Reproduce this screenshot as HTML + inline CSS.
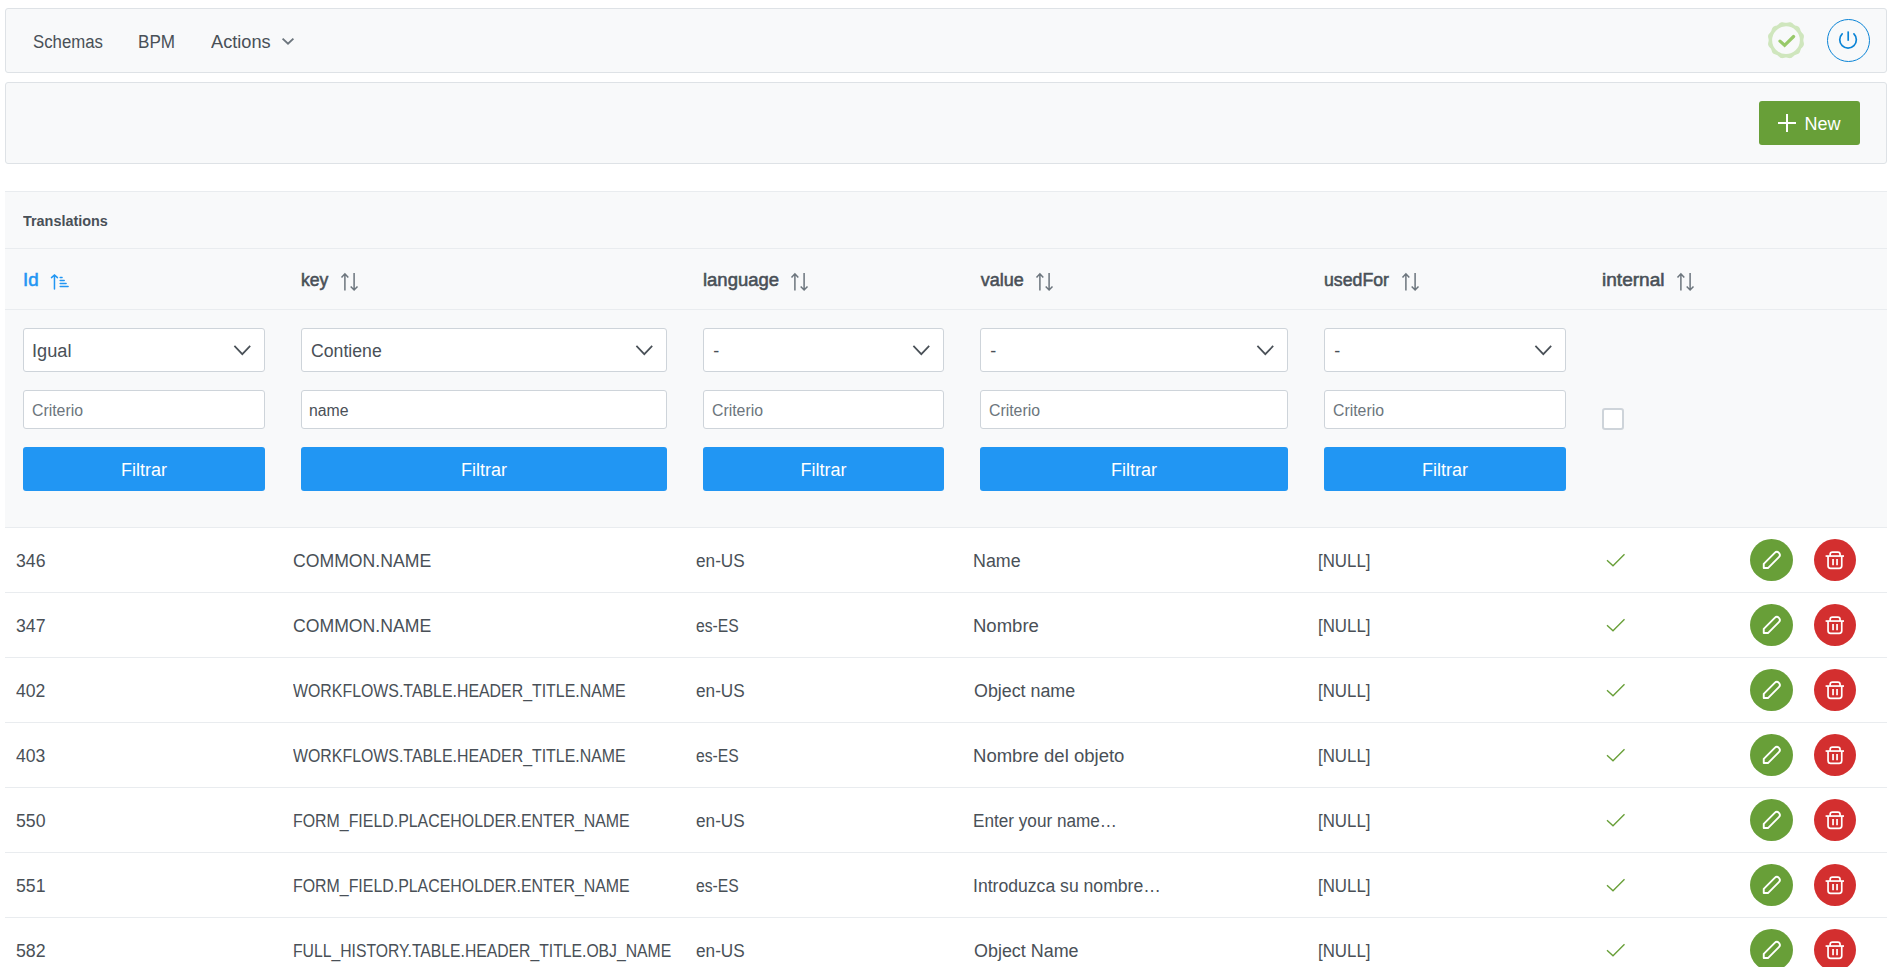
<!DOCTYPE html>
<html><head><meta charset="utf-8"><title>Translations</title>
<style>
html,body{margin:0;padding:0;background:#fff;width:1892px;height:967px;overflow:hidden;position:relative;font-family:"Liberation Sans", sans-serif;color:#495057;}
.t{position:absolute;white-space:nowrap;transform-origin:0 0;}
.b{position:absolute;box-sizing:border-box;}
.s{position:absolute;overflow:visible;}
</style></head><body>
<div class="b" style="left:5px;top:8px;width:1882px;height:65px;border:1px solid #dee2e6;border-radius:3px;background:#f8f9fa;"></div>
<div class="b" style="left:5px;top:82px;width:1882px;height:82px;border:1px solid #dee2e6;border-radius:3px;background:#f8f9fa;"></div>
<div class="b" style="left:5px;top:191px;width:1882px;height:337px;background:#f8f9fa;"></div>
<div class="b" style="left:5px;top:191px;width:1882px;height:1px;background:#e9ecef;"></div>
<div class="b" style="left:5px;top:248px;width:1882px;height:1px;background:#e9ecef;"></div>
<div class="b" style="left:5px;top:309px;width:1882px;height:1px;background:#e9ecef;"></div>
<div class="b" style="left:5px;top:527px;width:1882px;height:1px;background:#e9ecef;"></div>
<div class="b" style="left:5px;top:592px;width:1882px;height:1px;background:#e9ecef;"></div>
<div class="b" style="left:5px;top:657px;width:1882px;height:1px;background:#e9ecef;"></div>
<div class="b" style="left:5px;top:722px;width:1882px;height:1px;background:#e9ecef;"></div>
<div class="b" style="left:5px;top:787px;width:1882px;height:1px;background:#e9ecef;"></div>
<div class="b" style="left:5px;top:852px;width:1882px;height:1px;background:#e9ecef;"></div>
<div class="b" style="left:5px;top:917px;width:1882px;height:1px;background:#e9ecef;"></div>
<svg class="s" style="left:278px;top:32px" width="20" height="16" viewBox="0 0 20 16"><path d="M4.6,6.6 L10,11.6 L15.4,6.6" fill="none" stroke="#6c757d" stroke-width="1.9"/></svg>
<svg class="s" style="left:1766px;top:20px" width="40" height="40" viewBox="0 0 40 40"><polygon points="37.35,20.20 37.39,20.81 37.49,21.42 37.63,22.05 37.78,22.70 37.90,23.36 37.94,24.01 37.89,24.66 37.72,25.28 37.45,25.87 37.08,26.42 36.65,26.93 36.20,27.41 35.76,27.89 35.36,28.37 35.03,28.87 34.75,29.42 34.53,30.00 34.34,30.62 34.15,31.26 33.92,31.88 33.63,32.48 33.26,33.01 32.81,33.46 32.28,33.83 31.68,34.12 31.06,34.35 30.42,34.54 29.80,34.73 29.22,34.95 28.68,35.23 28.17,35.56 27.69,35.96 27.21,36.40 26.73,36.85 26.22,37.28 25.67,37.65 25.08,37.92 24.46,38.09 23.81,38.14 23.16,38.10 22.50,37.98 21.85,37.83 21.22,37.69 20.61,37.59 20.00,37.55 19.39,37.59 18.78,37.69 18.15,37.83 17.50,37.98 16.84,38.10 16.19,38.14 15.54,38.09 14.92,37.92 14.33,37.65 13.78,37.28 13.27,36.85 12.79,36.40 12.31,35.96 11.83,35.56 11.33,35.23 10.78,34.95 10.20,34.73 9.58,34.54 8.94,34.35 8.32,34.12 7.72,33.83 7.19,33.46 6.74,33.01 6.37,32.48 6.08,31.88 5.85,31.26 5.66,30.62 5.47,30.00 5.25,29.42 4.97,28.87 4.64,28.37 4.24,27.89 3.80,27.41 3.35,26.93 2.92,26.42 2.55,25.87 2.28,25.28 2.11,24.66 2.06,24.01 2.10,23.36 2.22,22.70 2.37,22.05 2.51,21.42 2.61,20.81 2.65,20.20 2.61,19.59 2.51,18.98 2.37,18.35 2.22,17.70 2.10,17.04 2.06,16.39 2.11,15.74 2.28,15.12 2.55,14.53 2.92,13.98 3.35,13.47 3.80,12.99 4.24,12.51 4.64,12.03 4.97,11.52 5.25,10.98 5.47,10.40 5.66,9.78 5.85,9.14 6.08,8.52 6.37,7.92 6.74,7.39 7.19,6.94 7.72,6.57 8.32,6.28 8.94,6.05 9.58,5.86 10.20,5.67 10.78,5.45 11.32,5.17 11.83,4.84 12.31,4.44 12.79,4.00 13.27,3.55 13.78,3.12 14.33,2.75 14.92,2.48 15.54,2.31 16.19,2.26 16.84,2.30 17.50,2.42 18.15,2.57 18.78,2.71 19.39,2.81 20.00,2.85 20.61,2.81 21.22,2.71 21.85,2.57 22.50,2.42 23.16,2.30 23.81,2.26 24.46,2.31 25.08,2.48 25.67,2.75 26.22,3.12 26.73,3.55 27.21,4.00 27.69,4.44 28.17,4.84 28.68,5.17 29.22,5.45 29.80,5.67 30.42,5.86 31.06,6.05 31.68,6.28 32.28,6.57 32.81,6.94 33.26,7.39 33.63,7.92 33.92,8.52 34.15,9.14 34.34,9.78 34.53,10.40 34.75,10.98 35.03,11.52 35.36,12.03 35.76,12.51 36.20,12.99 36.65,13.47 37.08,13.98 37.45,14.53 37.72,15.12 37.89,15.74 37.94,16.39 37.90,17.04 37.78,17.70 37.63,18.35 37.49,18.98 37.39,19.59" fill="#cfe6bd"/><circle cx="20" cy="20.2" r="13.85" fill="#f8f9fa"/><path d="M14.0,21.1 L18.6,25.3 L27.6,16.5" fill="none" stroke="#98c96a" stroke-width="3.2" stroke-linecap="round"/></svg>
<div class="b" style="left:1827px;top:19px;width:43px;height:43px;border:1px solid #0b84d6;border-radius:50%;"></div>
<svg class="s" style="left:1834px;top:26px" width="28" height="28" viewBox="0 0 28 28"><path d="M14.2,5.4 V14.8" stroke="#0b84d6" stroke-width="1.7" fill="none"/><path d="M8.18,7.88 A8.3,8.3 0 1 0 19.92,7.88" stroke="#0b84d6" stroke-width="1.7" fill="none" stroke-linecap="round"/></svg>
<div class="b" style="left:1759px;top:101px;width:101px;height:44px;background:#689f38;border-radius:3px;"></div>
<svg class="s" style="left:1777px;top:113px" width="20" height="20" viewBox="0 0 20 20"><path d="M10,1 V19 M1,10 H19" stroke="#fff" stroke-width="2" fill="none"/></svg>
<svg class="s" style="left:46px;top:268px" width="28" height="26" viewBox="0 0 28 26"><g stroke="#2196f3" stroke-width="1.5" fill="none" stroke-linecap="round"><path d="M8.47,7.1 V21.05 M5.5,9.6 L8.47,7.0 L11.45,9.6"/><path d="M14.2,9.4 H16.05 M14.2,12.5 H18.2 M14.2,15.5 H20.1 M14.2,18.6 H22.1"/></g></svg>
<svg class="s" style="left:339.79999999999995px;top:272px" width="20" height="20" viewBox="0 0 20 20"><g stroke="#6c757d" stroke-width="1.5" fill="none"><path d="M4.9,1.6 V18.6 M1.5,5.6 L4.9,1.8 L8.3,5.6"/><path d="M14.1,1 V18.0 M10.7,14.5 L14.1,18.0 L17.5,14.5"/></g></svg>
<svg class="s" style="left:790.3px;top:272px" width="20" height="20" viewBox="0 0 20 20"><g stroke="#6c757d" stroke-width="1.5" fill="none"><path d="M4.9,1.6 V18.6 M1.5,5.6 L4.9,1.8 L8.3,5.6"/><path d="M14.1,1 V18.0 M10.7,14.5 L14.1,18.0 L17.5,14.5"/></g></svg>
<svg class="s" style="left:1034.8000000000002px;top:272px" width="20" height="20" viewBox="0 0 20 20"><g stroke="#6c757d" stroke-width="1.5" fill="none"><path d="M4.9,1.6 V18.6 M1.5,5.6 L4.9,1.8 L8.3,5.6"/><path d="M14.1,1 V18.0 M10.7,14.5 L14.1,18.0 L17.5,14.5"/></g></svg>
<svg class="s" style="left:1400.5px;top:272px" width="20" height="20" viewBox="0 0 20 20"><g stroke="#6c757d" stroke-width="1.5" fill="none"><path d="M4.9,1.6 V18.6 M1.5,5.6 L4.9,1.8 L8.3,5.6"/><path d="M14.1,1 V18.0 M10.7,14.5 L14.1,18.0 L17.5,14.5"/></g></svg>
<svg class="s" style="left:1675.5px;top:272px" width="20" height="20" viewBox="0 0 20 20"><g stroke="#6c757d" stroke-width="1.5" fill="none"><path d="M4.9,1.6 V18.6 M1.5,5.6 L4.9,1.8 L8.3,5.6"/><path d="M14.1,1 V18.0 M10.7,14.5 L14.1,18.0 L17.5,14.5"/></g></svg>
<div class="b" style="left:23px;top:328px;width:242px;height:44px;border:1px solid #ced4da;border-radius:3px;background:#fff;"></div>
<svg class="s" style="left:232px;top:340px" width="22" height="18" viewBox="0 0 22 18"><path d="M2.4,5.9 L10.3,14.2 L18.2,5.9" fill="none" stroke="#495057" stroke-width="1.7"/></svg>
<div class="b" style="left:23px;top:390px;width:242px;height:39px;border:1px solid #ced4da;border-radius:3px;background:#fff;"></div>
<div class="b" style="left:23px;top:447px;width:242px;height:44px;background:#2196f3;border-radius:3px;"></div>
<div class="t" style="left:23px;top:460.66px;width:242px;text-align:center;font-size:18px;line-height:18px;color:#fff">Filtrar</div>
<div class="b" style="left:301px;top:328px;width:366px;height:44px;border:1px solid #ced4da;border-radius:3px;background:#fff;"></div>
<svg class="s" style="left:634px;top:340px" width="22" height="18" viewBox="0 0 22 18"><path d="M2.4,5.9 L10.3,14.2 L18.2,5.9" fill="none" stroke="#495057" stroke-width="1.7"/></svg>
<div class="b" style="left:301px;top:390px;width:366px;height:39px;border:1px solid #ced4da;border-radius:3px;background:#fff;"></div>
<div class="b" style="left:301px;top:447px;width:366px;height:44px;background:#2196f3;border-radius:3px;"></div>
<div class="t" style="left:301px;top:460.66px;width:366px;text-align:center;font-size:18px;line-height:18px;color:#fff">Filtrar</div>
<div class="b" style="left:703px;top:328px;width:241px;height:44px;border:1px solid #ced4da;border-radius:3px;background:#fff;"></div>
<svg class="s" style="left:911px;top:340px" width="22" height="18" viewBox="0 0 22 18"><path d="M2.4,5.9 L10.3,14.2 L18.2,5.9" fill="none" stroke="#495057" stroke-width="1.7"/></svg>
<div class="b" style="left:703px;top:390px;width:241px;height:39px;border:1px solid #ced4da;border-radius:3px;background:#fff;"></div>
<div class="b" style="left:703px;top:447px;width:241px;height:44px;background:#2196f3;border-radius:3px;"></div>
<div class="t" style="left:703px;top:460.66px;width:241px;text-align:center;font-size:18px;line-height:18px;color:#fff">Filtrar</div>
<div class="b" style="left:980px;top:328px;width:308px;height:44px;border:1px solid #ced4da;border-radius:3px;background:#fff;"></div>
<svg class="s" style="left:1255px;top:340px" width="22" height="18" viewBox="0 0 22 18"><path d="M2.4,5.9 L10.3,14.2 L18.2,5.9" fill="none" stroke="#495057" stroke-width="1.7"/></svg>
<div class="b" style="left:980px;top:390px;width:308px;height:39px;border:1px solid #ced4da;border-radius:3px;background:#fff;"></div>
<div class="b" style="left:980px;top:447px;width:308px;height:44px;background:#2196f3;border-radius:3px;"></div>
<div class="t" style="left:980px;top:460.66px;width:308px;text-align:center;font-size:18px;line-height:18px;color:#fff">Filtrar</div>
<div class="b" style="left:1324px;top:328px;width:242px;height:44px;border:1px solid #ced4da;border-radius:3px;background:#fff;"></div>
<svg class="s" style="left:1533px;top:340px" width="22" height="18" viewBox="0 0 22 18"><path d="M2.4,5.9 L10.3,14.2 L18.2,5.9" fill="none" stroke="#495057" stroke-width="1.7"/></svg>
<div class="b" style="left:1324px;top:390px;width:242px;height:39px;border:1px solid #ced4da;border-radius:3px;background:#fff;"></div>
<div class="b" style="left:1324px;top:447px;width:242px;height:44px;background:#2196f3;border-radius:3px;"></div>
<div class="t" style="left:1324px;top:460.66px;width:242px;text-align:center;font-size:18px;line-height:18px;color:#fff">Filtrar</div>
<div class="b" style="left:1602px;top:408px;width:22px;height:22px;border:2px solid #ced4da;border-radius:3px;background:#fff;"></div>
<div class="t" style="left:33.02px;top:32.76px;font-size:18px;line-height:18px;font-weight:400;color:#495057;transform:scaleX(0.9319);">Schemas</div>
<div class="t" style="left:138.18px;top:32.76px;font-size:18px;line-height:18px;font-weight:400;color:#495057;transform:scaleX(0.9502);">BPM</div>
<div class="t" style="left:210.92px;top:32.76px;font-size:18px;line-height:18px;font-weight:400;color:#495057;transform:scaleX(1.0111);">Actions</div>
<div class="t" style="left:1804.54px;top:114.76px;font-size:18px;line-height:18px;font-weight:400;color:#fff;">New</div>
<div class="t" style="left:23.27px;top:212.88px;font-size:15.5px;line-height:15.5px;font-weight:700;color:#495057;transform:scaleX(0.9292);">Translations</div>
<div class="t" style="left:23.38px;top:270.76px;font-size:18px;line-height:18px;font-weight:400;color:#2196f3;transform:scaleX(1.0376);-webkit-text-stroke:0.55px currentColor;">Id</div>
<div class="t" style="left:300.80px;top:270.76px;font-size:18px;line-height:18px;font-weight:400;color:#495057;transform:scaleX(0.9765);-webkit-text-stroke:0.55px currentColor;">key</div>
<div class="t" style="left:703.06px;top:270.76px;font-size:18px;line-height:18px;font-weight:400;color:#495057;transform:scaleX(1.0260);-webkit-text-stroke:0.55px currentColor;">language</div>
<div class="t" style="left:980.71px;top:270.76px;font-size:18px;line-height:18px;font-weight:400;color:#495057;-webkit-text-stroke:0.55px currentColor;">value</div>
<div class="t" style="left:1324.30px;top:270.76px;font-size:18px;line-height:18px;font-weight:400;color:#495057;transform:scaleX(0.9834);-webkit-text-stroke:0.55px currentColor;">usedFor</div>
<div class="t" style="left:1601.75px;top:270.76px;font-size:18px;line-height:18px;font-weight:400;color:#495057;transform:scaleX(1.0596);-webkit-text-stroke:0.55px currentColor;">internal</div>
<div class="t" style="left:32.43px;top:341.76px;font-size:18px;line-height:18px;font-weight:400;color:#495057;transform:scaleX(1.0099);">Igual</div>
<div class="t" style="left:31.74px;top:403.46px;font-size:16px;line-height:16px;font-weight:400;color:#6c757d;transform:scaleX(0.9893);">Criterio</div>
<div class="t" style="left:311.21px;top:341.76px;font-size:18px;line-height:18px;font-weight:400;color:#495057;transform:scaleX(0.9819);">Contiene</div>
<div class="t" style="left:309.20px;top:403.46px;font-size:16px;line-height:16px;font-weight:400;color:#495057;transform:scaleX(0.9873);">name</div>
<div class="t" style="left:713.33px;top:341.76px;font-size:18px;line-height:18px;font-weight:400;color:#495057;">-</div>
<div class="t" style="left:711.74px;top:403.46px;font-size:16px;line-height:16px;font-weight:400;color:#6c757d;transform:scaleX(0.9893);">Criterio</div>
<div class="t" style="left:990.33px;top:341.76px;font-size:18px;line-height:18px;font-weight:400;color:#495057;">-</div>
<div class="t" style="left:988.74px;top:403.46px;font-size:16px;line-height:16px;font-weight:400;color:#6c757d;transform:scaleX(0.9893);">Criterio</div>
<div class="t" style="left:1334.33px;top:341.76px;font-size:18px;line-height:18px;font-weight:400;color:#495057;">-</div>
<div class="t" style="left:1332.74px;top:403.46px;font-size:16px;line-height:16px;font-weight:400;color:#6c757d;transform:scaleX(0.9893);">Criterio</div>
<div class="t" style="left:15.64px;top:551.76px;font-size:18px;line-height:18px;font-weight:400;color:#495057;transform:scaleX(0.9826);">346</div>
<div class="t" style="left:293.11px;top:551.76px;font-size:18px;line-height:18px;font-weight:400;color:#495057;transform:scaleX(0.9799);">COMMON.NAME</div>
<div class="t" style="left:695.80px;top:551.76px;font-size:18px;line-height:18px;font-weight:400;color:#495057;transform:scaleX(0.9554);">en-US</div>
<div class="t" style="left:973.25px;top:551.76px;font-size:18px;line-height:18px;font-weight:400;color:#495057;transform:scaleX(0.9909);">Name</div>
<div class="t" style="left:1318.01px;top:551.76px;font-size:18px;line-height:18px;font-weight:400;color:#495057;transform:scaleX(0.9368);">[NULL]</div>
<div class="t" style="left:15.64px;top:616.76px;font-size:18px;line-height:18px;font-weight:400;color:#495057;transform:scaleX(0.9827);">347</div>
<div class="t" style="left:293.11px;top:616.76px;font-size:18px;line-height:18px;font-weight:400;color:#495057;transform:scaleX(0.9799);">COMMON.NAME</div>
<div class="t" style="left:695.87px;top:616.76px;font-size:18px;line-height:18px;font-weight:400;color:#495057;transform:scaleX(0.8711);">es-ES</div>
<div class="t" style="left:973.20px;top:616.76px;font-size:18px;line-height:18px;font-weight:400;color:#495057;transform:scaleX(1.0289);">Nombre</div>
<div class="t" style="left:1318.01px;top:616.76px;font-size:18px;line-height:18px;font-weight:400;color:#495057;transform:scaleX(0.9368);">[NULL]</div>
<div class="t" style="left:15.86px;top:681.76px;font-size:18px;line-height:18px;font-weight:400;color:#495057;transform:scaleX(0.9763);">402</div>
<div class="t" style="left:293.40px;top:681.76px;font-size:18px;line-height:18px;font-weight:400;color:#495057;transform:scaleX(0.8828);">WORKFLOWS.TABLE.HEADER_TITLE.NAME</div>
<div class="t" style="left:695.80px;top:681.76px;font-size:18px;line-height:18px;font-weight:400;color:#495057;transform:scaleX(0.9554);">en-US</div>
<div class="t" style="left:973.82px;top:681.76px;font-size:18px;line-height:18px;font-weight:400;color:#495057;transform:scaleX(0.9912);">Object name</div>
<div class="t" style="left:1318.01px;top:681.76px;font-size:18px;line-height:18px;font-weight:400;color:#495057;transform:scaleX(0.9368);">[NULL]</div>
<div class="t" style="left:15.86px;top:746.76px;font-size:18px;line-height:18px;font-weight:400;color:#495057;transform:scaleX(0.9763);">403</div>
<div class="t" style="left:293.40px;top:746.76px;font-size:18px;line-height:18px;font-weight:400;color:#495057;transform:scaleX(0.8828);">WORKFLOWS.TABLE.HEADER_TITLE.NAME</div>
<div class="t" style="left:695.87px;top:746.76px;font-size:18px;line-height:18px;font-weight:400;color:#495057;transform:scaleX(0.8711);">es-ES</div>
<div class="t" style="left:973.20px;top:746.76px;font-size:18px;line-height:18px;font-weight:400;color:#495057;transform:scaleX(1.0293);">Nombre del objeto</div>
<div class="t" style="left:1318.01px;top:746.76px;font-size:18px;line-height:18px;font-weight:400;color:#495057;transform:scaleX(0.9368);">[NULL]</div>
<div class="t" style="left:15.58px;top:811.76px;font-size:18px;line-height:18px;font-weight:400;color:#495057;transform:scaleX(0.9821);">550</div>
<div class="t" style="left:292.68px;top:811.76px;font-size:18px;line-height:18px;font-weight:400;color:#495057;transform:scaleX(0.8835);">FORM_FIELD.PLACEHOLDER.ENTER_NAME</div>
<div class="t" style="left:695.80px;top:811.76px;font-size:18px;line-height:18px;font-weight:400;color:#495057;transform:scaleX(0.9554);">en-US</div>
<div class="t" style="left:973.27px;top:811.76px;font-size:18px;line-height:18px;font-weight:400;color:#495057;transform:scaleX(0.9532);">Enter your name…</div>
<div class="t" style="left:1318.01px;top:811.76px;font-size:18px;line-height:18px;font-weight:400;color:#495057;transform:scaleX(0.9368);">[NULL]</div>
<div class="t" style="left:15.58px;top:876.76px;font-size:18px;line-height:18px;font-weight:400;color:#495057;transform:scaleX(0.9815);">551</div>
<div class="t" style="left:292.68px;top:876.76px;font-size:18px;line-height:18px;font-weight:400;color:#495057;transform:scaleX(0.8835);">FORM_FIELD.PLACEHOLDER.ENTER_NAME</div>
<div class="t" style="left:695.87px;top:876.76px;font-size:18px;line-height:18px;font-weight:400;color:#495057;transform:scaleX(0.8711);">es-ES</div>
<div class="t" style="left:973.08px;top:876.76px;font-size:18px;line-height:18px;font-weight:400;color:#495057;transform:scaleX(0.9780);">Introduzca su nombre…</div>
<div class="t" style="left:1318.01px;top:876.76px;font-size:18px;line-height:18px;font-weight:400;color:#495057;transform:scaleX(0.9368);">[NULL]</div>
<div class="t" style="left:15.58px;top:941.76px;font-size:18px;line-height:18px;font-weight:400;color:#495057;transform:scaleX(0.9860);">582</div>
<div class="t" style="left:292.70px;top:941.76px;font-size:18px;line-height:18px;font-weight:400;color:#495057;transform:scaleX(0.8737);">FULL_HISTORY.TABLE.HEADER_TITLE.OBJ_NAME</div>
<div class="t" style="left:695.80px;top:941.76px;font-size:18px;line-height:18px;font-weight:400;color:#495057;transform:scaleX(0.9554);">en-US</div>
<div class="t" style="left:973.81px;top:941.76px;font-size:18px;line-height:18px;font-weight:400;color:#495057;transform:scaleX(0.9953);">Object Name</div>
<div class="t" style="left:1318.01px;top:941.76px;font-size:18px;line-height:18px;font-weight:400;color:#495057;transform:scaleX(0.9368);">[NULL]</div>
<svg class="s" style="left:1600px;top:548px" width="30" height="24" viewBox="0 0 30 24"><path d="M7,12.2 L13,17.8 L24.5,6.2" fill="none" stroke="#689f38" stroke-width="1.35"/></svg>
<div class="b" style="left:1750px;top:539px;width:43px;height:42px;background:#689f38;border-radius:50%;"></div>
<svg class="s" style="left:1762px;top:550px" width="20" height="20" viewBox="0 0 20 20"><path d="M1.75,18.05 V13.85 L12.71,2.91 A2.95,2.95 0 0 1 16.89,7.09 L5.95,18.05 Z" fill="none" stroke="#fff" stroke-width="1.9" stroke-linejoin="round"/></svg>
<div class="b" style="left:1814px;top:539px;width:42px;height:42px;background:#d32f2f;border-radius:50%;"></div>
<svg class="s" style="left:1820px;top:546px" width="30" height="28" viewBox="0 0 30 28"><g fill="none" stroke="#fff" stroke-width="1.7"><path d="M5.6,10.05 H24"/><path d="M10.15,10 V8.3 Q10.15,6.05 12.4,6.05 H17.8 Q20.05,6.05 20.05,8.3 V10"/><path d="M8.05,10 V19.85 Q8.05,22.35 10.55,22.35 H19.25 Q21.75,22.35 21.75,19.85 V10"/><path d="M13.05,12.9 V19.3 M17.05,12.9 V19.3"/></g></svg>
<svg class="s" style="left:1600px;top:613px" width="30" height="24" viewBox="0 0 30 24"><path d="M7,12.2 L13,17.8 L24.5,6.2" fill="none" stroke="#689f38" stroke-width="1.35"/></svg>
<div class="b" style="left:1750px;top:604px;width:43px;height:42px;background:#689f38;border-radius:50%;"></div>
<svg class="s" style="left:1762px;top:615px" width="20" height="20" viewBox="0 0 20 20"><path d="M1.75,18.05 V13.85 L12.71,2.91 A2.95,2.95 0 0 1 16.89,7.09 L5.95,18.05 Z" fill="none" stroke="#fff" stroke-width="1.9" stroke-linejoin="round"/></svg>
<div class="b" style="left:1814px;top:604px;width:42px;height:42px;background:#d32f2f;border-radius:50%;"></div>
<svg class="s" style="left:1820px;top:611px" width="30" height="28" viewBox="0 0 30 28"><g fill="none" stroke="#fff" stroke-width="1.7"><path d="M5.6,10.05 H24"/><path d="M10.15,10 V8.3 Q10.15,6.05 12.4,6.05 H17.8 Q20.05,6.05 20.05,8.3 V10"/><path d="M8.05,10 V19.85 Q8.05,22.35 10.55,22.35 H19.25 Q21.75,22.35 21.75,19.85 V10"/><path d="M13.05,12.9 V19.3 M17.05,12.9 V19.3"/></g></svg>
<svg class="s" style="left:1600px;top:678px" width="30" height="24" viewBox="0 0 30 24"><path d="M7,12.2 L13,17.8 L24.5,6.2" fill="none" stroke="#689f38" stroke-width="1.35"/></svg>
<div class="b" style="left:1750px;top:669px;width:43px;height:42px;background:#689f38;border-radius:50%;"></div>
<svg class="s" style="left:1762px;top:680px" width="20" height="20" viewBox="0 0 20 20"><path d="M1.75,18.05 V13.85 L12.71,2.91 A2.95,2.95 0 0 1 16.89,7.09 L5.95,18.05 Z" fill="none" stroke="#fff" stroke-width="1.9" stroke-linejoin="round"/></svg>
<div class="b" style="left:1814px;top:669px;width:42px;height:42px;background:#d32f2f;border-radius:50%;"></div>
<svg class="s" style="left:1820px;top:676px" width="30" height="28" viewBox="0 0 30 28"><g fill="none" stroke="#fff" stroke-width="1.7"><path d="M5.6,10.05 H24"/><path d="M10.15,10 V8.3 Q10.15,6.05 12.4,6.05 H17.8 Q20.05,6.05 20.05,8.3 V10"/><path d="M8.05,10 V19.85 Q8.05,22.35 10.55,22.35 H19.25 Q21.75,22.35 21.75,19.85 V10"/><path d="M13.05,12.9 V19.3 M17.05,12.9 V19.3"/></g></svg>
<svg class="s" style="left:1600px;top:743px" width="30" height="24" viewBox="0 0 30 24"><path d="M7,12.2 L13,17.8 L24.5,6.2" fill="none" stroke="#689f38" stroke-width="1.35"/></svg>
<div class="b" style="left:1750px;top:734px;width:43px;height:42px;background:#689f38;border-radius:50%;"></div>
<svg class="s" style="left:1762px;top:745px" width="20" height="20" viewBox="0 0 20 20"><path d="M1.75,18.05 V13.85 L12.71,2.91 A2.95,2.95 0 0 1 16.89,7.09 L5.95,18.05 Z" fill="none" stroke="#fff" stroke-width="1.9" stroke-linejoin="round"/></svg>
<div class="b" style="left:1814px;top:734px;width:42px;height:42px;background:#d32f2f;border-radius:50%;"></div>
<svg class="s" style="left:1820px;top:741px" width="30" height="28" viewBox="0 0 30 28"><g fill="none" stroke="#fff" stroke-width="1.7"><path d="M5.6,10.05 H24"/><path d="M10.15,10 V8.3 Q10.15,6.05 12.4,6.05 H17.8 Q20.05,6.05 20.05,8.3 V10"/><path d="M8.05,10 V19.85 Q8.05,22.35 10.55,22.35 H19.25 Q21.75,22.35 21.75,19.85 V10"/><path d="M13.05,12.9 V19.3 M17.05,12.9 V19.3"/></g></svg>
<svg class="s" style="left:1600px;top:808px" width="30" height="24" viewBox="0 0 30 24"><path d="M7,12.2 L13,17.8 L24.5,6.2" fill="none" stroke="#689f38" stroke-width="1.35"/></svg>
<div class="b" style="left:1750px;top:799px;width:43px;height:42px;background:#689f38;border-radius:50%;"></div>
<svg class="s" style="left:1762px;top:810px" width="20" height="20" viewBox="0 0 20 20"><path d="M1.75,18.05 V13.85 L12.71,2.91 A2.95,2.95 0 0 1 16.89,7.09 L5.95,18.05 Z" fill="none" stroke="#fff" stroke-width="1.9" stroke-linejoin="round"/></svg>
<div class="b" style="left:1814px;top:799px;width:42px;height:42px;background:#d32f2f;border-radius:50%;"></div>
<svg class="s" style="left:1820px;top:806px" width="30" height="28" viewBox="0 0 30 28"><g fill="none" stroke="#fff" stroke-width="1.7"><path d="M5.6,10.05 H24"/><path d="M10.15,10 V8.3 Q10.15,6.05 12.4,6.05 H17.8 Q20.05,6.05 20.05,8.3 V10"/><path d="M8.05,10 V19.85 Q8.05,22.35 10.55,22.35 H19.25 Q21.75,22.35 21.75,19.85 V10"/><path d="M13.05,12.9 V19.3 M17.05,12.9 V19.3"/></g></svg>
<svg class="s" style="left:1600px;top:873px" width="30" height="24" viewBox="0 0 30 24"><path d="M7,12.2 L13,17.8 L24.5,6.2" fill="none" stroke="#689f38" stroke-width="1.35"/></svg>
<div class="b" style="left:1750px;top:864px;width:43px;height:42px;background:#689f38;border-radius:50%;"></div>
<svg class="s" style="left:1762px;top:875px" width="20" height="20" viewBox="0 0 20 20"><path d="M1.75,18.05 V13.85 L12.71,2.91 A2.95,2.95 0 0 1 16.89,7.09 L5.95,18.05 Z" fill="none" stroke="#fff" stroke-width="1.9" stroke-linejoin="round"/></svg>
<div class="b" style="left:1814px;top:864px;width:42px;height:42px;background:#d32f2f;border-radius:50%;"></div>
<svg class="s" style="left:1820px;top:871px" width="30" height="28" viewBox="0 0 30 28"><g fill="none" stroke="#fff" stroke-width="1.7"><path d="M5.6,10.05 H24"/><path d="M10.15,10 V8.3 Q10.15,6.05 12.4,6.05 H17.8 Q20.05,6.05 20.05,8.3 V10"/><path d="M8.05,10 V19.85 Q8.05,22.35 10.55,22.35 H19.25 Q21.75,22.35 21.75,19.85 V10"/><path d="M13.05,12.9 V19.3 M17.05,12.9 V19.3"/></g></svg>
<svg class="s" style="left:1600px;top:938px" width="30" height="24" viewBox="0 0 30 24"><path d="M7,12.2 L13,17.8 L24.5,6.2" fill="none" stroke="#689f38" stroke-width="1.35"/></svg>
<div class="b" style="left:1750px;top:929px;width:43px;height:42px;background:#689f38;border-radius:50%;"></div>
<svg class="s" style="left:1762px;top:940px" width="20" height="20" viewBox="0 0 20 20"><path d="M1.75,18.05 V13.85 L12.71,2.91 A2.95,2.95 0 0 1 16.89,7.09 L5.95,18.05 Z" fill="none" stroke="#fff" stroke-width="1.9" stroke-linejoin="round"/></svg>
<div class="b" style="left:1814px;top:929px;width:42px;height:42px;background:#d32f2f;border-radius:50%;"></div>
<svg class="s" style="left:1820px;top:936px" width="30" height="28" viewBox="0 0 30 28"><g fill="none" stroke="#fff" stroke-width="1.7"><path d="M5.6,10.05 H24"/><path d="M10.15,10 V8.3 Q10.15,6.05 12.4,6.05 H17.8 Q20.05,6.05 20.05,8.3 V10"/><path d="M8.05,10 V19.85 Q8.05,22.35 10.55,22.35 H19.25 Q21.75,22.35 21.75,19.85 V10"/><path d="M13.05,12.9 V19.3 M17.05,12.9 V19.3"/></g></svg>
</body></html>
